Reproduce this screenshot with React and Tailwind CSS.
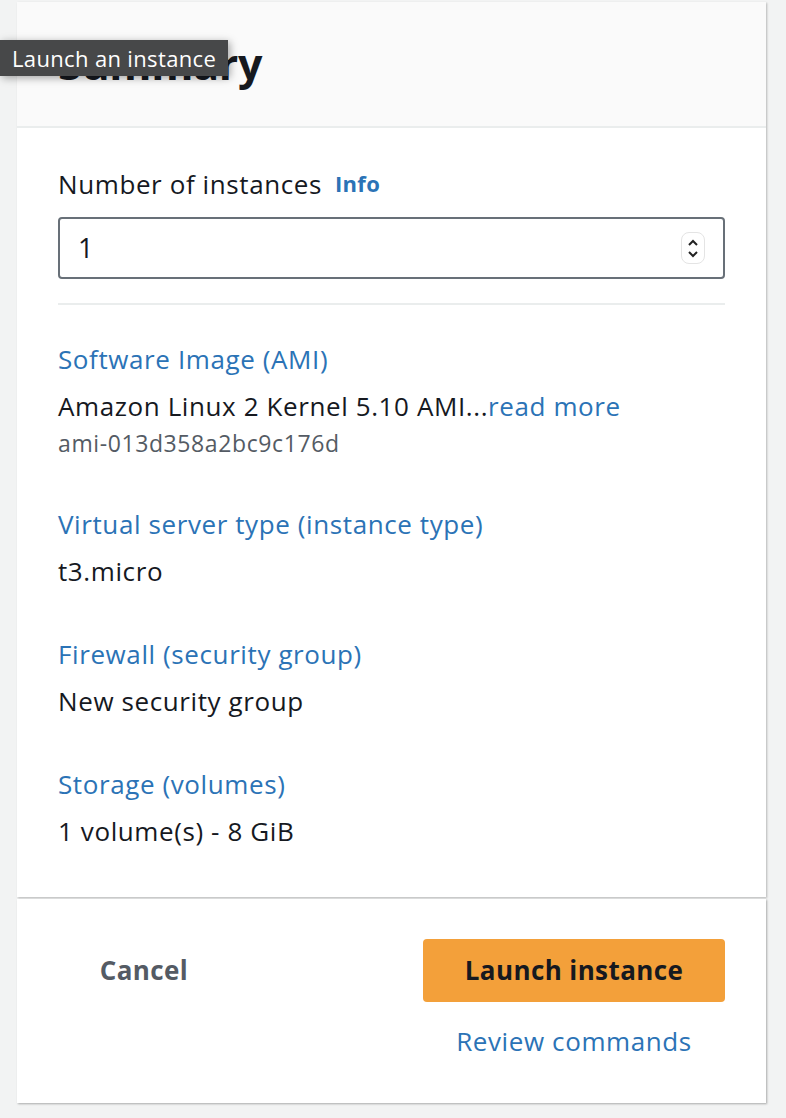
import React from "react";

const font = { fontFamily: '"Open Sans", "Liberation Sans", Arial, sans-serif' };

const Item = ({ label, value, sub, more }) => (
  <div className="flex flex-col">
    <a className="text-[26px] leading-[32px] tracking-[0.6px] text-[#2b73b6]">{label}</a>
    <p className="mt-[15px] text-[26px] leading-[32px] tracking-[0.6px] text-[#16191f]">
      {value}
      {more && <span className="text-[#2b73b6]">read more</span>}
    </p>
    {sub && <p className="mt-[7px] text-[23px] leading-[28px] tracking-[0.6px] text-[#545b64]">{sub}</p>}
  </div>
);

const App = () => {
  return (
    <div className="relative min-h-[1118px] w-[786px] bg-[#f2f3f3] pt-[2px]" style={font}>
      <div className="ml-[17px] w-[749px] bg-white shadow-[1px_1px_2px_rgba(0,0,0,0.25)]">
        <div className="flex h-[126px] items-center border-b-2 border-[#eaeded] bg-[#fafafa] px-[41px]">
          <h2 className="text-[43px] font-bold tracking-[-0.3px] text-[#16191f]">Summary</h2>
        </div>
        <div className="px-[41px] pt-[39px] pb-[50px]">
          <div className="flex items-center gap-[13px]">
            <span className="text-[26px] leading-[32px] tracking-[0.6px] text-[#16191f]">Number of instances</span>
            <span className="text-[22px] font-bold tracking-[0.3px] text-[#2b73b6]">Info</span>
          </div>
          <div className="mt-[17px] flex h-[62px] items-center justify-between rounded-[4px] border-2 border-[#687078] pl-[18px] pr-[18px]">
            <span className="text-[27px] text-[#16191f]">1</span>
            <div className="flex h-[32px] w-[24px] flex-col items-center justify-center rounded-[8px] border border-[#e4e4e4] bg-white">
              <svg width="12" height="8" viewBox="0 0 12 8" className="mb-[3px]">
                <path d="M2 6 L6 2 L10 6" fill="none" stroke="#222" strokeWidth="2" />
              </svg>
              <svg width="12" height="8" viewBox="0 0 12 8">
                <path d="M2 2 L6 6 L10 2" fill="none" stroke="#222" strokeWidth="2" />
              </svg>
            </div>
          </div>
          <div className="mt-[24px] h-[2px] bg-[#eaeded]" />
          <div className="mt-[38px] flex flex-col gap-[51px]">
            <Item label="Software Image (AMI)" value="Amazon Linux 2 Kernel 5.10 AMI..." more sub="ami-013d358a2bc9c176d" />
            <Item label="Virtual server type (instance type)" value="t3.micro" />
            <Item label="Firewall (security group)" value="New security group" />
            <Item label="Storage (volumes)" value="1 volume(s) - 8 GiB" />
          </div>
        </div>
      </div>
      <div className="mt-[2px] ml-[17px] w-[749px] bg-white shadow-[1px_1px_2px_rgba(0,0,0,0.3)] pt-[40px] pb-[46px]">
        <div className="flex items-start justify-between pr-[41px]">
          <button className="mt-[12px] w-[254px] text-center text-[26px] font-bold tracking-[0.4px] text-[#545b64]">Cancel</button>
          <div className="flex w-[302px] flex-col items-center">
            <button className="h-[63px] w-[302px] rounded-[4px] bg-[#f3a03a] text-[26px] font-bold tracking-[0.4px] text-[#16191f]">
              Launch instance
            </button>
            <a className="mt-[23px] text-[26px] leading-[32px] tracking-[0.6px] text-[#2b73b6]">Review commands</a>
          </div>
        </div>
      </div>
      <div className="absolute left-0 top-[40px] flex h-[36px] items-center bg-[#474849] px-[12px] text-[22px] tracking-[0.35px] text-white shadow-[2px_2px_8px_rgba(0,0,0,0.35)]">
        Launch an instance
      </div>
    </div>
  );
};

export default App;
